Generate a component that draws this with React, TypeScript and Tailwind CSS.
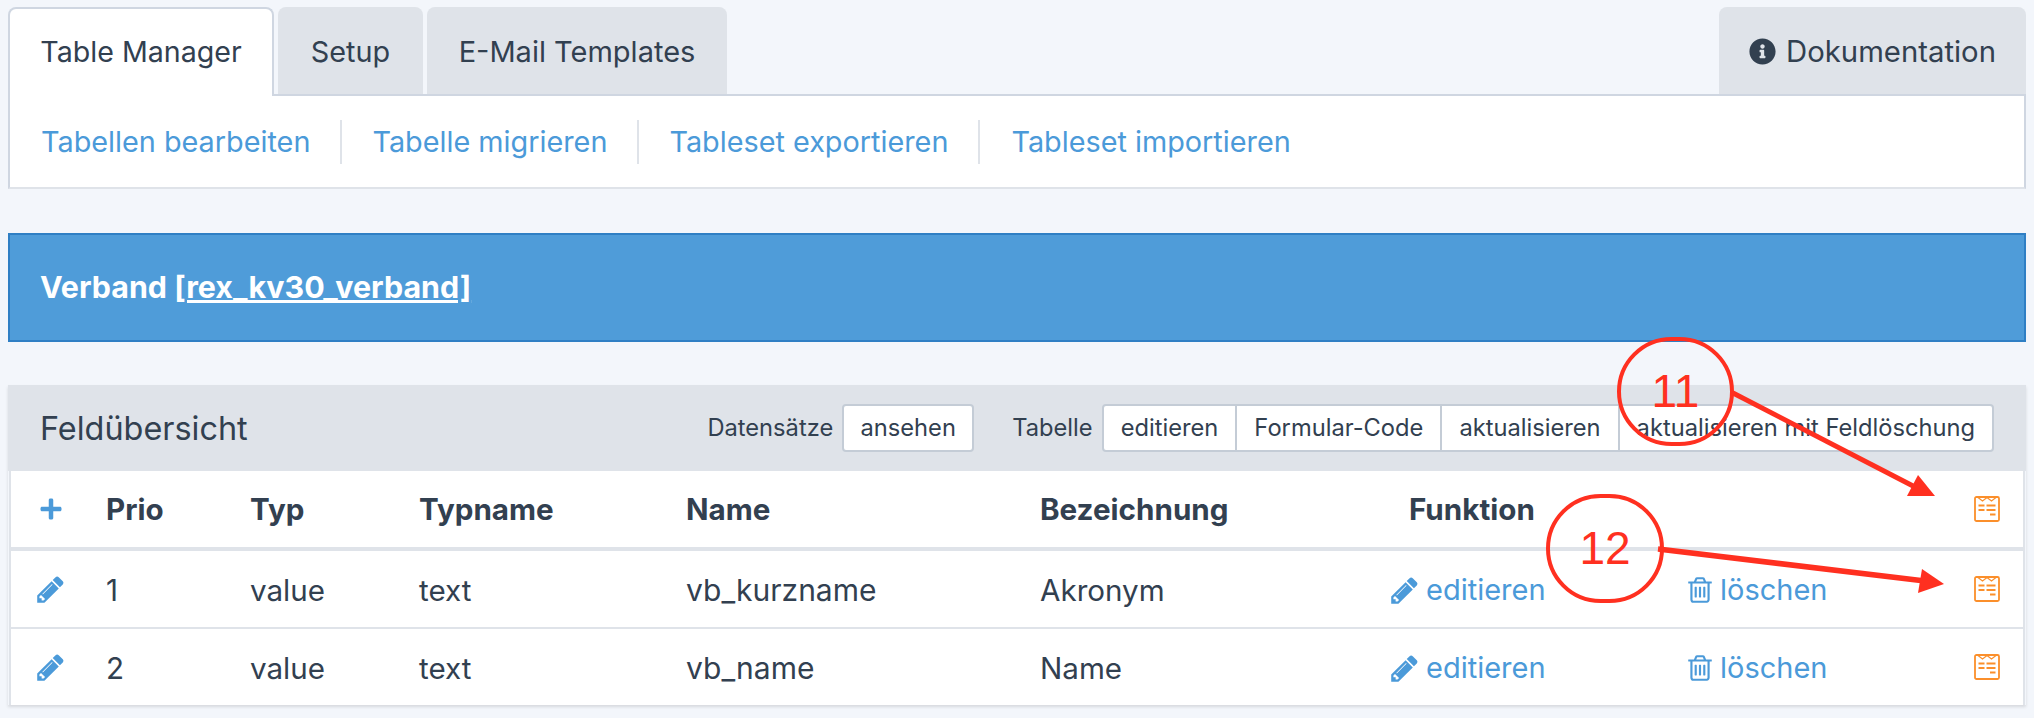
import { FaInfoCircle, FaPlus } from "react-icons/fa";

const PENCIL = "M491 1536l91-91-235-235-91 91v107h128v128h107zm523-928q0-22-22-22-10 0-17 7l-542 542q-7 7-7 17 0 22 22 22 10 0 17-7l542-542q7-7 7-17zm-54-192l416 416-832 832h-416v-416zm683 96q0 53-37 90l-166 166-416-416 166-165q36-38 90-38 53 0 91 38l235 234q37 39 37 91z";
const TRASH = "M704 736v576q0 14-9 23t-23 9h-64q-14 0-23-9t-9-23v-576q0-14 9-23t23-9h64q14 0 23 9t9 23zm256 0v576q0 14-9 23t-23 9h-64q-14 0-23-9t-9-23v-576q0-14 9-23t23-9h64q14 0 23 9t9 23zm256 0v576q0 14-9 23t-23 9h-64q-14 0-23-9t-9-23v-576q0-14 9-23t23-9h64q14 0 23 9t9 23zm128 724v-948h-896v948q0 22 7 40.5t14.5 27 10.5 8.5h832q3 0 10.5-8.5t14.5-27 7-40.5zm-672-1076h448l-48-117q-7-9-17-11h-317q-10 2-17 11zm928 32v64q0 14-9 23t-23 9h-96v948q0 83-47 143.5t-113 60.5h-832q-66 0-113-58.5t-47-141.5v-952h-96q-14 0-23-9t-9-23v-64q0-14 9-23t23-9h309l70-167q15-37 54-63t79-26h320q40 0 79 26t54 63l70 167h309q14 0 23 9t9 23z";

function Fa({ d, className }: { d: string; className: string }) {
  return (
    <svg viewBox="0 0 1792 1792" fill="currentColor" className={className}>
      <path d={d} />
    </svg>
  );
}

function Sheet() {
  return (
    <svg viewBox="0 0 26 26" className="w-[26px] h-[26px] text-[#fb8f2b]" fill="none" stroke="currentColor">
      <rect x="1" y="1" width="24" height="24" rx="1.5" strokeWidth="1.8" />
      <path d="M4 1.5l4.5 3.5L13 1.5l4.5 3.5L22 1.5" strokeWidth="1.2" />
      <path d="M4.5 9.5h6M12.5 9.5h9M4.5 14h6M12.5 14h9M16 18.5h5.5" strokeWidth="1.8" />
    </svg>
  );
}

const grid = "grid grid-cols-[95px_144px_169px_267px_354px_349px_296px_289px_1fr] items-center";

function Row({ prio, name, label, last }: { prio: string; name: string; label: string; last?: boolean }) {
  return (
    <div className={`${grid} ${last ? "h-[76px]" : "h-[78px] border-b-2 border-[#dfe3e9]"}`}>
      <div className="flex justify-center pr-[16px]">
        <Fa d={PENCIL} className="w-[31px] h-[31px] text-[#4b9ad9]" />
      </div>
      <div className="pt-[2px]">{prio}</div>
      <div className="pt-[2px]">value</div>
      <div className="pt-[2px]">text</div>
      <div className="pt-[2px] text-[30px]">{name}</div>
      <div className="pt-[2px]">{label}</div>
      <div className="flex items-center text-[#4b9ad9] pt-[2px] text-[29px]">
        <Fa d={PENCIL} className="w-[31px] h-[31px] mr-[6px]" />
        <span>editieren</span>
      </div>
      <div className="flex items-center text-[#4b9ad9] pt-[2px] text-[29px]">
        <Fa d={TRASH} className="w-[30px] h-[30px] mr-[5px]" />
        <span>löschen</span>
      </div>
      <div>
        <Sheet />
      </div>
    </div>
  );
}

function Btn({ children, last }: { children: string; last?: boolean }) {
  return (
    <div className={`h-full flex items-center px-[17px] ${last ? "" : "border-r-2 border-[#c4ccd6]"}`}>{children}</div>
  );
}

export default function App() {
  return (
    <div className="relative w-[2034px] h-[718px] overflow-hidden bg-[#f3f6fb] text-[#324050] text-[28.8px] font-['Inter',sans-serif] pt-[7px] pl-[8px] pr-[8px]">
      {/* Tabs */}
      <div className="flex items-end h-[87px]">
        <div className="w-[266px] h-[89px] -mb-[2px] relative z-10 bg-white border-2 border-b-0 border-[#cfd6e1] rounded-t-[8px] flex items-center justify-center text-[28.6px]">
          Table Manager
        </div>
        <div className="ml-[4px] w-[145px] h-[87px] bg-[#dfe3e9] rounded-t-[8px] flex items-center justify-center pt-[2px]">Setup</div>
        <div className="ml-[4px] w-[300px] h-[87px] bg-[#dfe3e9] rounded-t-[8px] flex items-center justify-center pt-[2px] text-[29px]">E-Mail Templates</div>
        <div className="ml-auto w-[307px] h-[87px] bg-[#dfe3e9] rounded-t-[8px] flex items-center justify-center gap-[10px] pt-[2px] text-[29.3px]">
          <FaInfoCircle className="w-[27px] h-[27px]" />
          Dokumentation
        </div>
      </div>

      {/* Sub nav */}
      <div className="h-[95px] bg-white border-2 border-[#cfd6e1] border-b-[#dfe3e9] flex items-center pl-[31px] text-[#4b9ad9]">
        <span>Tabellen bearbeiten</span>
        <span className="w-[2px] h-[44px] bg-[#dfe3e9] mx-[30px]" />
        <span>Tabelle migrieren</span>
        <span className="w-[2px] h-[44px] bg-[#dfe3e9] mx-[30px]" />
        <span>Tableset exportieren</span>
        <span className="w-[2px] h-[44px] bg-[#dfe3e9] mx-[30px]" />
        <span className="ml-[1px]">Tableset importieren</span>
      </div>

      {/* Blue heading */}
      <div className="mt-[44px] h-[109px] bg-[#4f9cd9] border-2 border-[#2f7fc4] flex items-center pl-[30px] text-white font-bold text-[30.4px]">
        Verband&nbsp;<span className="underline">[rex_kv30_verband]</span>
      </div>

      {/* Panel */}
      <div className="mt-[43px] shadow-[0_2px_3px_rgba(0,0,0,0.12)]">
        <div className="h-[86px] bg-[#dfe3e9] flex items-center pl-[32px] pr-[32px] text-[23.7px]">
          <span className="text-[32.4px] mr-auto mt-[2px]">Feldübersicht</span>
          <span>Datensätze</span>
          <div className="ml-[9px] h-[48px] w-[132px] bg-white border-2 border-[#c4ccd6] rounded-[4px] flex items-center justify-center">ansehen</div>
          <span className="ml-[38px]">Tabelle</span>
          <div className="ml-[9px] h-[48px] bg-white border-2 border-[#c4ccd6] rounded-[4px] flex items-center">
            <Btn>editieren</Btn>
            <Btn>Formular-Code</Btn>
            <Btn>aktualisieren</Btn>
            <Btn last>aktualisieren mit Feldlöschung</Btn>
          </div>
        </div>
        <div className="bg-white mx-[1px] border-x-2 border-[#dfe3e9] text-[29.6px]">
          <div className={`${grid} h-[80px] border-b-4 border-[#dfe3e9] font-bold`}>
            <div className="flex justify-center pr-[16px]">
              <FaPlus className="w-[24px] h-[24px] text-[#4b9ad9]" />
            </div>
            <div>Prio</div>
            <div>Typ</div>
            <div>Typname</div>
            <div>Name</div>
            <div>Bezeichnung</div>
            <div className="pl-[20px] col-span-2">Funktion</div>
            <div>
              <Sheet />
            </div>
          </div>
          <Row prio="1" name="vb_kurzname" label="Akronym" />
          <Row prio="2" name="vb_name" label="Name" last />
        </div>
      </div>

      {/* Annotations */}
      <div className="absolute left-[1617px] top-[337px] w-[117px] h-[109px] rounded-full border-[4.5px] border-[#ff3020] flex items-center justify-center text-[#ff3020] text-[46px] font-['Liberation_Sans',sans-serif]">
        11
      </div>
      <div className="absolute left-[1546px] top-[494px] w-[118px] h-[109px] rounded-full border-[4.5px] border-[#ff3020] flex items-center justify-center text-[#ff3020] text-[46px] font-['Liberation_Sans',sans-serif]">
        12
      </div>
      <svg className="absolute left-0 top-0 w-[2034px] h-[718px] pointer-events-none" viewBox="0 0 2034 718">
        <line x1="1733" y1="393" x2="1915" y2="487" stroke="#ff3020" strokeWidth="5" />
        <polygon points="1918,475 1907,496 1935,496" fill="#ff3020" />
        <line x1="1658" y1="549" x2="1925" y2="581" stroke="#ff3020" strokeWidth="5.5" />
        <polygon points="1922,569 1944,584 1918,593" fill="#ff3020" />
      </svg>
    </div>
  );
}
